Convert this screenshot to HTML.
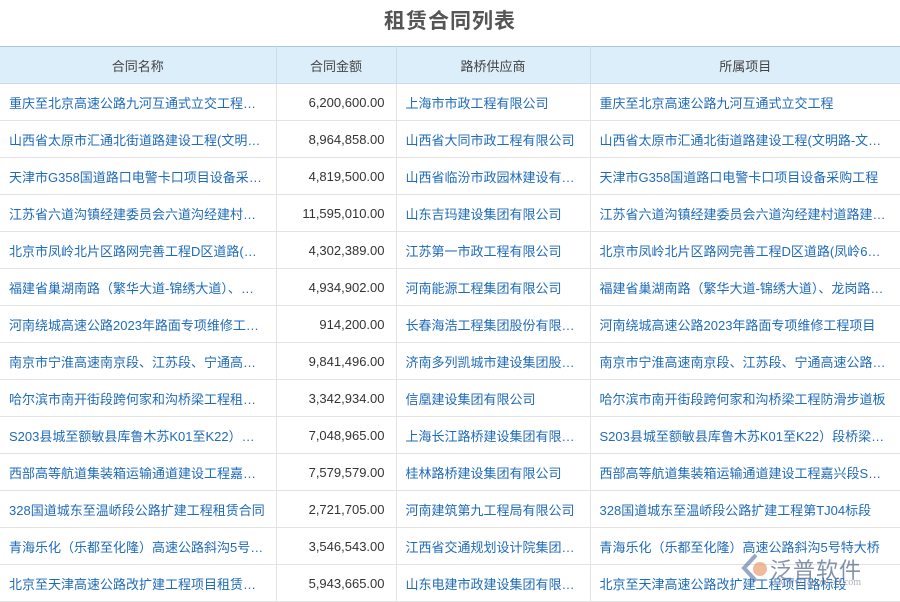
<!DOCTYPE html>
<html><head><meta charset="utf-8">
<style>
*{margin:0;padding:0;box-sizing:border-box}
body{width:900px;height:600px;overflow:hidden;background:#fff;font-family:"Liberation Sans","Noto Sans CJK SC",sans-serif;position:relative}
.title{height:46px;text-align:center;font-size:21px;font-weight:bold;color:#555;line-height:44px;letter-spacing:1px}
table{border-collapse:collapse;table-layout:fixed;width:900px;border-top:1px solid #a9c7e3}
th{height:37px;background:#ddeefb;color:#444;font-weight:normal;font-size:13px;border-right:1px solid #c8dcee;border-bottom:1px solid #c8dcee}
td{height:37px;font-size:13px;color:#1f6bb8;padding:0 9px;white-space:nowrap;overflow:hidden;text-overflow:ellipsis;border-right:1px solid #e3e3e3;border-bottom:1px solid #e3e3e3}
td.n{color:#333;text-align:right;padding-right:11px}
th:last-child,td:last-child{border-right:none}
.wm{position:absolute;left:770px;top:553px;font-size:22px;color:rgba(90,110,140,.75);letter-spacing:1px}
.wm2{position:absolute;left:780px;top:577px;font-size:10px;color:rgba(120,120,150,.6);font-family:"Liberation Serif",serif}
</style></head><body>
<div class="title">租赁合同列表</div>
<table>
<colgroup><col style="width:276px"><col style="width:120px"><col style="width:194px"><col style="width:310px"></colgroup>
<tr><th>合同名称</th><th>合同金额</th><th>路桥供应商</th><th>所属项目</th></tr>
<tr><td>重庆至北京高速公路九河互通式立交工程租赁合同</td><td class="n">6,200,600.00</td><td>上海市市政工程有限公司</td><td>重庆至北京高速公路九河互通式立交工程</td></tr>
<tr><td>山西省太原市汇通北街道路建设工程(文明路租赁</td><td class="n">8,964,858.00</td><td>山西省大同市政工程有限公司</td><td>山西省太原市汇通北街道路建设工程(文明路-文公路段)</td></tr>
<tr><td>天津市G358国道路口电警卡口项目设备采购租赁</td><td class="n">4,819,500.00</td><td>山西省临汾市政园林建设有限公司</td><td>天津市G358国道路口电警卡口项目设备采购工程</td></tr>
<tr><td>江苏省六道沟镇经建委员会六道沟经建村道路</td><td class="n">11,595,010.00</td><td>山东吉玛建设集团有限公司</td><td>江苏省六道沟镇经建委员会六道沟经建村道路建设工程</td></tr>
<tr><td>北京市凤岭北片区路网完善工程D区道路(凤岭</td><td class="n">4,302,389.00</td><td>江苏第一市政工程有限公司</td><td>北京市凤岭北片区路网完善工程D区道路(凤岭6号路)</td></tr>
<tr><td>福建省巢湖南路（繁华大道-锦绣大道）、龙岗</td><td class="n">4,934,902.00</td><td>河南能源工程集团有限公司</td><td>福建省巢湖南路（繁华大道-锦绣大道）、龙岗路工程</td></tr>
<tr><td>河南绕城高速公路2023年路面专项维修工程租赁</td><td class="n">914,200.00</td><td>长春海浩工程集团股份有限公司</td><td>河南绕城高速公路2023年路面专项维修工程项目</td></tr>
<tr><td>南京市宁淮高速南京段、江苏段、宁通高速公路</td><td class="n">9,841,496.00</td><td>济南多列凯城市建设集团股份有限公司</td><td>南京市宁淮高速南京段、江苏段、宁通高速公路养护工程</td></tr>
<tr><td>哈尔滨市南开街段跨何家和沟桥梁工程租赁合同</td><td class="n">3,342,934.00</td><td>信凰建设集团有限公司</td><td>哈尔滨市南开街段跨何家和沟桥梁工程防滑步道板</td></tr>
<tr><td>S203县城至额敏县库鲁木苏K01至K22）段桥梁</td><td class="n">7,048,965.00</td><td>上海长江路桥建设集团有限公司</td><td>S203县城至额敏县库鲁木苏K01至K22）段桥梁工程项目</td></tr>
<tr><td>西部高等航道集装箱运输通道建设工程嘉兴段租赁</td><td class="n">7,579,579.00</td><td>桂林路桥建设集团有限公司</td><td>西部高等航道集装箱运输通道建设工程嘉兴段SG标段</td></tr>
<tr><td>328国道城东至温峤段公路扩建工程租赁合同</td><td class="n">2,721,705.00</td><td>河南建筑第九工程局有限公司</td><td>328国道城东至温峤段公路扩建工程第TJ04标段</td></tr>
<tr><td>青海乐化（乐都至化隆）高速公路斜沟5号特大桥</td><td class="n">3,546,543.00</td><td>江西省交通规划设计院集团有限公司</td><td>青海乐化（乐都至化隆）高速公路斜沟5号特大桥</td></tr>
<tr><td>北京至天津高速公路改扩建工程项目租赁合同</td><td class="n">5,943,665.00</td><td>山东电建市政建设集团有限公司</td><td>北京至天津高速公路改扩建工程项目路标段</td></tr>
</table>
<svg style="position:absolute;left:740px;top:552px" width="32" height="32" viewBox="0 0 32 32"><path d="M16 3 L4 16 L16 29" fill="none" stroke="rgba(80,110,160,.6)" stroke-width="4"/><circle cx="20" cy="17" r="7" fill="rgba(230,140,90,.6)"/></svg>
<div class="wm">泛普软件</div>
<div class="wm2">www.fanpusoft.com</div>
</body></html>
